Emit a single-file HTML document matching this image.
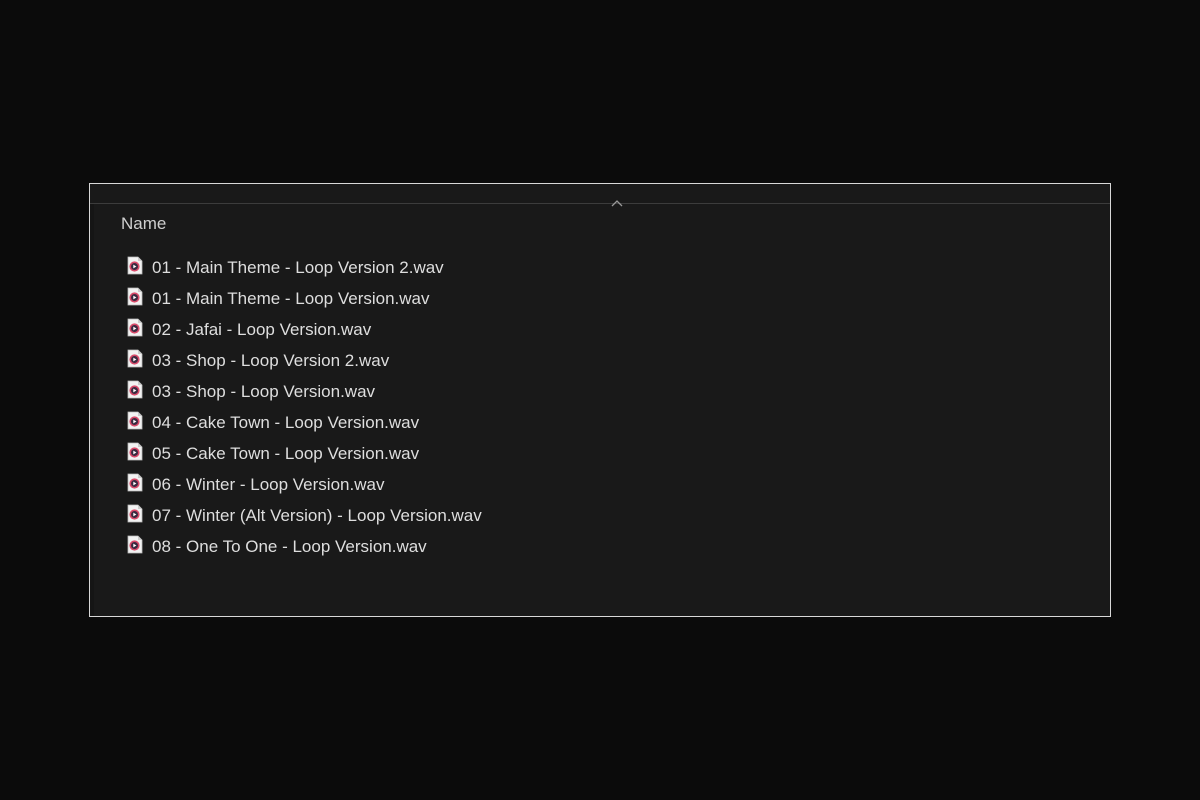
<!DOCTYPE html>
<html><head><meta charset="utf-8"><style>
html,body{margin:0;padding:0;background:#0b0b0b;width:1200px;height:800px;overflow:hidden}
.box{position:absolute;left:89px;top:183px;width:1020px;height:432px;border:1px solid #d8d8d8;background:#191919}
.hl{position:absolute;left:0;right:0;top:19px;height:1px;background:#3c3c3c}
.strip{position:absolute;left:0;top:20px;bottom:0;width:4px;background:#151515}
.car{position:absolute;left:520px;top:15px}
.name{position:absolute;left:31px;top:30px;font:17px "Liberation Sans",sans-serif;color:#cfcfcf}
.row{position:absolute;left:36px;height:20px;font:17px "Liberation Sans",sans-serif;color:#dedede;white-space:nowrap}
.row svg{position:absolute;left:0;top:0}
.row span{position:absolute;left:26px;top:2px}
</style></head><body>
<div class="box">
<div class="hl"></div><div class="strip"></div>
<svg class="car" width="14" height="10"><path d="M2 7 L7 2 L12 7" fill="none" stroke="#9a9a9a" stroke-width="1.3"/></svg>
<div class="name">Name</div>
</div>
<div id="rows"></div>
<script>
var n=["01 - Main Theme - Loop Version 2.wav","01 - Main Theme - Loop Version.wav","02 - Jafai - Loop Version.wav","03 - Shop - Loop Version 2.wav","03 - Shop - Loop Version.wav","04 - Cake Town - Loop Version.wav","05 - Cake Town - Loop Version.wav","06 - Winter - Loop Version.wav","07 - Winter (Alt Version) - Loop Version.wav","08 - One To One - Loop Version.wav"];
var h="";
var ic='<svg width="18" height="20"><path d="M2 1 H12 L16 5 V18 H2 Z" fill="#f2f2f2" stroke="#bbb" stroke-width="0.8"/><path d="M12 1 V5 H16" fill="#ccc"/><circle cx="8.5" cy="10.5" r="4.3" fill="#3a2a40" stroke="#d94a6a" stroke-width="1.6"/><path d="M7.3 8.6 L10.4 10.5 L7.3 12.4Z" fill="#fff"/></svg>';
for(var i=0;i<n.length;i++){h+='<div class="row" style="left:126px;top:'+(256+i*31)+'px">'+ic+'<span>'+n[i]+'</span></div>';}
document.getElementById("rows").innerHTML=h;
</script>
</body></html>
